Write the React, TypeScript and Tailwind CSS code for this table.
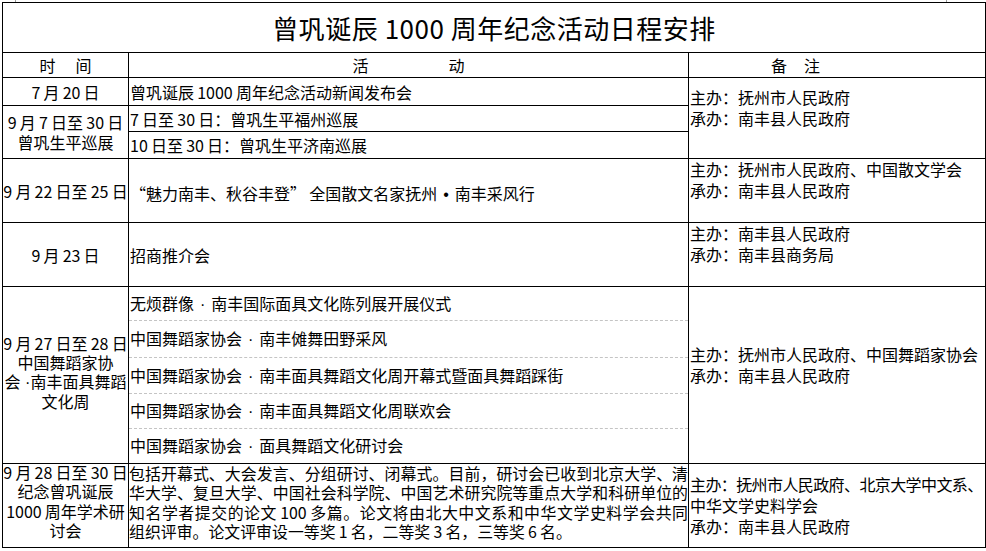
import React from "react";

const cell = "border-r border-b border-black flex items-center overflow-visible";

// CJK/digit gaps are narrow in the source document
const th = (s: string) => s.replace(/ /g, "\u2009");

const Dot = ({ c = "·", tight = false }: { c?: string; tight?: boolean }) => (
    <span className={`font-['Liberation_Sans',sans-serif] ${tight ? "" : "px-[1.5px]"}`}>
        {tight ? ` ${c}` : ` ${c} `}
    </span>
);

const withDots = (s: string) => {
    const parts = s.split(" · ");
    return parts.map((p, i) => (
        <React.Fragment key={i}>
            {i > 0 && <Dot />}
            {p}
        </React.Fragment>
    ));
};

const remark = (lines: string[], phantom = true) => (
    <div className={`leading-[21px] pl-px ${phantom ? "pb-[21px]" : ""}`}>
        {lines.map((l, i) => (
            <div key={l} className={`whitespace-nowrap ${i === 0 && l.length > 18 ? "tracking-[-0.6px]" : ""}`}>
                {l}
            </div>
        ))}
    </div>
);

const dateCell = (lines: React.ReactNode[], leading = "leading-[20px]") => (
    <div className={`w-full text-center ${leading}`}>
        {lines.map((l, i) => (
            <div key={i} className="whitespace-nowrap">
                {typeof l === "string" ? th(l) : l}
            </div>
        ))}
    </div>
);

const weekItems = [
    "无烦群像 · 南丰国际面具文化陈列展开展仪式",
    "中国舞蹈家协会 · 南丰傩舞田野采风",
    "中国舞蹈家协会 · 南丰面具舞蹈文化周开幕式暨面具舞蹈踩街",
    "中国舞蹈家协会 · 南丰面具舞蹈文化周联欢会",
    "中国舞蹈家协会 · 面具舞蹈文化研讨会",
];

const symposium = [
    "包括开幕式、大会发言、分组研讨、闭幕式。目前，研讨会已收到北京大学、清",
    "华大学、复旦大学、中国社会科学院、中国艺术研究院等重点大学和科研单位的",
    th("知名学者提交的论文 100 多篇。论文将由北大中文系和中华文学史料学会共同"),
];

export default function App() {
    return (
        <main className="w-[986px] h-[551px] bg-white text-black text-[16px] font-['Noto_Sans_CJK_SC','Noto_Sans',sans-serif] overflow-hidden">
            <div className="flex h-[2px]">
                <div className="ml-[15px] w-px bg-[#9a9a9a]" />
                <div className="ml-[930px] w-px bg-[#9a9a9a]" />
            </div>
            <div className="pl-[2px]">
                <div className="grid w-[984px] grid-cols-[126px_560px_297px] grid-rows-[50px_25px_28px_26px_27px_64px_64px_34px_37px_36px_35px_35px_84px] border-l border-t border-black">
                    {/* title */}
                    <div className={`${cell} col-span-3 justify-center text-[26px] leading-none tracking-[0.5px]`}>
                        <span>曾巩诞辰 1000 周年纪念活动日程安排</span>
                    </div>

                    {/* header */}
                    <div className={`${cell} justify-center gap-[20px] leading-none`}>
                        <span>时</span>
                        <span>间</span>
                    </div>
                    <div className={`${cell} justify-center gap-[80px] leading-none`}>
                        <span>活</span>
                        <span>动</span>
                    </div>
                    <div className={`${cell} pl-[82px] gap-[17px] leading-none`}>
                        <span>备</span>
                        <span>注</span>
                    </div>

                    {/* 7/20 */}
                    <div className={`${cell} col-start-1 row-start-3`}>{dateCell(["7 月 20 日"])}</div>
                    <div className={`${cell} col-start-2 row-start-3 pl-px whitespace-nowrap`}>
                        <span>{th("曾巩诞辰 1000 周年纪念活动新闻发布会")}</span>
                    </div>
                    <div className={`${cell} col-start-3 row-start-3 row-span-3`}>
                        {remark(["主办：抚州市人民政府", "承办：南丰县人民政府"])}
                    </div>

                    {/* 9/7 */}
                    <div className={`${cell} col-start-1 row-start-4 row-span-2`}>
                        {dateCell(["9 月 7 日至 30 日", "曾巩生平巡展"])}
                    </div>
                    <div className={`${cell} col-start-2 row-start-4 pl-px whitespace-nowrap`}>
                        <span>{th("7 日至 30 日：曾巩生平福州巡展")}</span>
                    </div>
                    <div className={`${cell} col-start-2 row-start-5 pl-px whitespace-nowrap`}>
                        <span>{th("10 日至 30 日：曾巩生平济南巡展")}</span>
                    </div>

                    {/* 9/22 */}
                    <div className={`${cell} col-start-1 row-start-6`}>{dateCell(["9 月 22 日至 25 日"])}</div>
                    <div className={`${cell} col-start-2 row-start-6 pl-px pt-[6px] whitespace-nowrap`}>
                        <span>
                            “魅力南丰、秋谷丰登”{"\u2009"}全国散文名家抚州
                            <Dot c="•" />
                            南丰采风行
                        </span>
                    </div>
                    <div className={`${cell} col-start-3 row-start-6`}>
                        {remark(["主办：抚州市人民政府、中国散文学会", "承办：南丰县人民政府"])}
                    </div>

                    {/* 9/23 */}
                    <div className={`${cell} col-start-1 row-start-7`}>{dateCell(["9 月 23 日"])}</div>
                    <div className={`${cell} col-start-2 row-start-7 pl-px whitespace-nowrap`}>
                        <span>招商推介会</span>
                    </div>
                    <div className={`${cell} col-start-3 row-start-7`}>
                        {remark(["主办：南丰县人民政府", "承办：南丰县商务局"])}
                    </div>

                    {/* 9/27 */}
                    <div className={`${cell} col-start-1 row-start-8 row-span-5`}>
                        {dateCell(
                            [
                                "9 月 27 日至 28 日",
                                "中国舞蹈家协",
                                <>
                                    会<Dot tight />
                                    南丰面具舞蹈
                                </>,
                                "文化周",
                            ],
                            "leading-[19px] pb-[6px]"
                        )}
                    </div>
                    {weekItems.map((t, i) => (
                        <div
                            key={t}
                            className={`col-start-2 flex border-r border-black ${i === 4 ? "border-b" : ""}`}
                            style={{ gridRowStart: 8 + i }}
                        >
                            <div
                                className={`flex w-full items-center pl-px whitespace-nowrap ${
                                    i < 4 ? "border-b border-dashed border-[#c4c4c4]" : ""
                                }`}
                            >
                                <span>{withDots(t)}</span>
                            </div>
                        </div>
                    ))}
                    <div className={`${cell} col-start-3 row-start-8 row-span-5`}>
                        {remark(["主办：抚州市人民政府、中国舞蹈家协会", "承办：南丰县人民政府"])}
                    </div>

                    {/* 9/28 */}
                    <div className={`${cell} col-start-1 row-start-13`}>
                        {dateCell(["9 月 28 日至 30 日", "纪念曾巩诞辰", "1000 周年学术研", "讨会"], "leading-[19.5px] pb-[8px]")}
                    </div>
                    <div className={`${cell} col-start-2 row-start-13`}>
                        <div className="w-full pb-[6px] leading-[19.5px] text-[15.9px]">
                            {symposium.map((l) => (
                                <div key={l} className="whitespace-nowrap text-justify [text-align-last:justify]">
                                    {l}
                                </div>
                            ))}
                            <div className="whitespace-nowrap">
                                {th("组织评审。论文评审设一等奖 1 名，二等奖 3 名，三等奖 6 名。")}
                            </div>
                        </div>
                    </div>
                    <div className={`${cell} col-start-3 row-start-13`}>
                        {remark(["主办：抚州市人民政府、北京大学中文系、", "中华文学史料学会", "承办：南丰县人民政府"], false)}
                    </div>
                </div>
            </div>
        </main>
    );
}
